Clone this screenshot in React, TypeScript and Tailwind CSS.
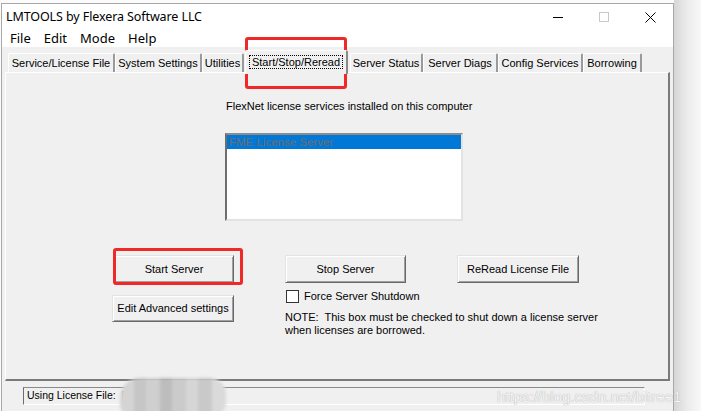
import React from "react";

function Tab({ label, className, selected }: { label: string; className: string; selected?: boolean }) {
  if (selected) {
    return (
      <div
        className={`relative z-10 h-[24px] -mb-[2px] flex items-start justify-center pt-[4px] bg-[#f0f0f0] border-t border-l border-white border-r-2 border-r-[#8a8a8a] rounded-t-[2px] ${className}`}
      >
        <span className="px-[2px] leading-[12px] border border-dotted border-black whitespace-nowrap">{label}</span>
      </div>
    );
  }
  return (
    <div
      className={`h-[19px] flex items-center justify-center bg-[#f0f0f0] border-t border-l border-white border-r-2 border-r-[#9a9a9a] rounded-t-[2px] whitespace-nowrap ${className}`}
    >
      {label}
    </div>
  );
}

function Btn({ label, className }: { label: string; className: string }) {
  return (
    <div
      className={`flex items-center justify-center bg-[#f0f0f0] border border-t-[#e3e3e3] border-l-[#e3e3e3] border-r-[#696969] border-b-[#696969] shadow-[inset_1px_1px_0_#ffffff,inset_-1px_-1px_0_#a0a0a0] whitespace-nowrap ${className}`}
    >
      {label}
    </div>
  );
}

export default function App() {
  return (
    <div className="relative w-[701px] h-[411px] overflow-hidden bg-[#fbfbfb] flex font-['Liberation_Sans',Arial,sans-serif] text-[11px] text-black">
      {/* window */}
      <div className="ml-[1px] mt-[3px] w-[673px] h-[420px] flex-none flex flex-col border-t border-l border-r border-[#a8a8a8] bg-[#f0f0f0]">
        {/* title bar */}
        <div className="h-[26px] flex-none flex items-center bg-white">
          <div className="pl-[4px] text-[12.5px] font-['Noto_Sans',sans-serif] tracking-[-0.1px]">LMTOOLS by Flexera Software LLC</div>
          <div className="ml-auto flex h-full">
            <div className="w-[46px] h-full flex items-center justify-center">
              <div className="w-[10px] h-px bg-black mt-[1px]" />
            </div>
            <div className="w-[46px] h-full flex items-center justify-center">
              <div className="w-[10px] h-[10px] border border-[#c8c8c8]" />
            </div>
            <div className="w-[46px] h-full flex items-center justify-center">
              <svg width="11" height="11" viewBox="0 0 11 11">
                <path d="M0.5 0.5 L10.5 10.5 M10.5 0.5 L0.5 10.5" stroke="#000" strokeWidth="1" />
              </svg>
            </div>
          </div>
        </div>
        {/* menu bar */}
        <div className="h-[17px] flex-none flex items-center gap-[13px] pl-[8px] bg-white text-[13px] font-['Noto_Sans',sans-serif]">
          <span>File</span>
          <span>Edit</span>
          <span>Mode</span>
          <span>Help</span>
        </div>
        {/* tabs row */}
        <div className="h-[25px] flex-none flex items-end pl-[6px]">
          <Tab label="Service/License File" className="w-[107px]" />
          <Tab label="System Settings" className="w-[87px]" />
          <Tab label="Utilities" className="w-[42px]" />
          <Tab label="Start/Stop/Reread" className="w-[103px] ml-[1px]" selected />
          <Tab label="Server Status" className="w-[73px] ml-[2px]" />
          <Tab label="Server Diags" className="w-[75px]" />
          <Tab label="Config Services" className="w-[85px]" />
          <Tab label="Borrowing" className="w-[59px]" />
        </div>
        {/* panel */}
        <div className="ml-[3px] w-[665px] h-[309px] flex-none flex flex-col border-t border-l border-white border-r-2 border-b-2 border-r-[#7a7a7a] border-b-[#7a7a7a]">
          <div className="ml-[220px] mt-[27px] leading-[13px] whitespace-nowrap">FlexNet license services installed on this computer</div>
          <div className="ml-[219px] mt-[20px] w-[238px] h-[88px] bg-white border-2 border-t-[#8c8c8c] border-l-[#6e6e6e] border-r-[#e3e3e3] border-b-[#e3e3e3]">
            <div className="h-[14px] bg-[#0078d7] text-[#6d6d6d] text-[11.5px] leading-[14px] pl-[2px] whitespace-nowrap">FME License Server</div>
          </div>
          {/* row 1 buttons */}
          <div className="mt-[34px] flex">
            <Btn label="Start Server" className="ml-[108px] w-[120px] h-[28px]" />
            <Btn label="Stop Server" className="ml-[51px] w-[121px] h-[28px]" />
            <Btn label="ReRead License File" className="ml-[51px] w-[122px] h-[28px]" />
          </div>
          {/* row 2 */}
          <div className="flex items-start">
            <Btn label="Edit Advanced settings" className="ml-[106px] mt-[12px] w-[122px] h-[27px]" />
            <div className="ml-[51px] mt-[7px] flex flex-col">
              <div className="flex items-center ml-[1px] h-[13px]">
                <div className="w-[13px] h-[13px] bg-white border border-[#333333]" />
                <span className="ml-[5px] leading-[13px] whitespace-nowrap">Force Server Shutdown</span>
              </div>
              <div className="mt-[8px] leading-[13px] whitespace-pre">{"NOTE:  This box must be checked to shut down a license server\nwhen licenses are borrowed."}</div>
            </div>
          </div>
        </div>
        {/* status bar */}
        <div className="pt-[6px] pl-[21px]">
          <div className="w-[622px] h-[18px] flex items-center pl-[3px] border border-t-[#8a8a8a] border-l-[#6e6e6e] border-r-white border-b-white whitespace-nowrap text-[10.5px]">
            Using License File:&nbsp; L
          </div>
        </div>
      </div>
      {/* window shadow */}
      <div className="flex-1 h-full bg-gradient-to-r from-[#d6d6d6] via-[#ececec] to-[#f8f8f8]" />

      {/* annotation overlays */}
      <div className="absolute left-[245px] top-[37px] w-[102px] h-[52px] border-[3px] border-[#f02828] rounded-[3px]" />
      <div className="absolute left-[113px] top-[248px] w-[130px] h-[37px] border-[3px] border-[#f02828] rounded-[3px]" />

      {/* blurred region */}
      <div className="absolute left-[120px] top-[378px] w-[106px] h-[40px] rounded-tl-[20px] rounded-bl-[14px] rounded-r-[16px] overflow-hidden flex blur-[1.5px]">
        <div className="w-[14px] bg-[#d4d4d4]" />
        <div className="w-[12px] bg-[#c6c6c6]" />
        <div className="w-[14px] bg-[#cfcfcf]" />
        <div className="w-[12px] bg-[#bdbdbd]" />
        <div className="w-[14px] bg-[#cbcbcb]" />
        <div className="w-[12px] bg-[#d6d6d6]" />
        <div className="w-[14px] bg-[#c9c9c9]" />
        <div className="w-[14px] bg-[#dadada]" />
      </div>

      {/* watermark */}
      <div className="absolute left-[497px] top-[388px] text-[15px] leading-[18px] text-[#f4f4f4] whitespace-nowrap [text-shadow:0_0_1px_#9a9a9a]">
        https://blog.csdn.net/bitree1
      </div>
    </div>
  );
}
